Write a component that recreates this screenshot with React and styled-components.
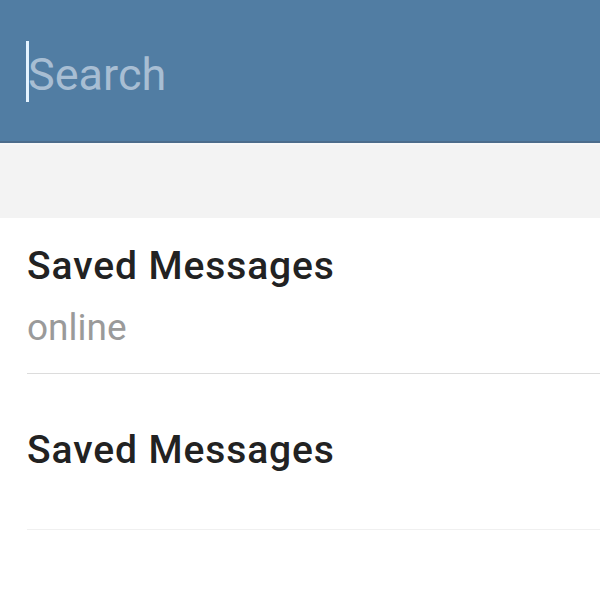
import React from 'react'
import styled, { createGlobalStyle } from 'styled-components'

const GlobalStyle = createGlobalStyle`
  body {
    margin: 0;
    background: #fff;
    font-family: Roboto, 'Liberation Sans', sans-serif;
  }
`

const Screen = styled.div`
  width: 600px;
  height: 600px;
  overflow: hidden;
  background: #fff;
`

const Header = styled.div`
  height: 143px;
  background-color: #517da3;
  border-bottom: 2px solid #4c6c8b;
  display: flex;
  align-items: center;
  padding-left: 26px;
  padding-top: 2px;
  box-sizing: border-box;
`

const SearchField = styled.div`
  display: flex;
  align-items: center;
  height: 62px;
`

const Caret = styled.span`
  width: 3px;
  height: 61px;
  background: #e4f3ff;
  flex-shrink: 0;
`

const Placeholder = styled.span`
  font-size: 45px;
  color: #a8bed3;
  margin-left: -1px;
  margin-top: 6px;
  line-height: 1;
`

const Spacer = styled.div`
  height: 75px;
  background: #f3f3f3;
  border-top: 2px solid #f7f7f7;
  box-sizing: border-box;
`

const List = styled.div`
  display: flex;
  flex-direction: column;
`

const Row = styled.div`
  height: 156px;
  margin-left: 27px;
  display: flex;
  flex-direction: column;
  justify-content: center;
  border-bottom: 1px solid ${props => props.faint ? '#f0f0f0' : '#dcdcdc'};
  box-sizing: border-box;
  padding-bottom: ${props => props.faint ? '4px' : '0'};
`

const Title = styled.div`
  font-size: 39px;
  font-weight: 500;
  letter-spacing: 0.9px;
  color: #222;
  line-height: 44px;
`

const Status = styled.div`
  font-size: 37px;
  color: #9a9a9a;
  line-height: 40px;
  margin-top: 20px;
`

const chats = [
  { name: 'Saved Messages', status: 'online' },
  { name: 'Saved Messages' }
]

export default function App () {
  return (
    <Screen>
      <GlobalStyle />
      <Header>
        <SearchField>
          <Caret />
          <Placeholder>Search</Placeholder>
        </SearchField>
      </Header>
      <Spacer />
      <List>
        {chats.map((c, i) => (
          <Row key={i} faint={!c.status}>
            <Title>{c.name}</Title>
            {c.status && <Status>{c.status}</Status>}
          </Row>
        ))}
      </List>
    </Screen>
  )
}
